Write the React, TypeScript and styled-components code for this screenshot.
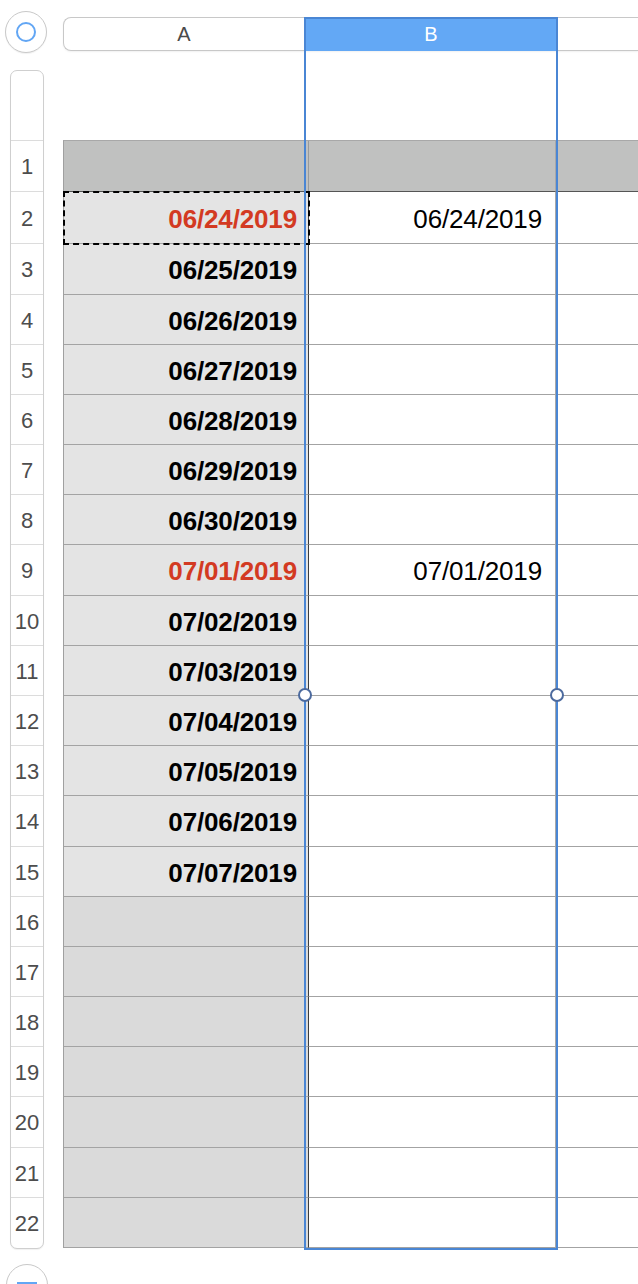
import React, { FC } from "react";
import styled, { createGlobalStyle } from "styled-components";

// row heights as measured down the sheet (row 1 is the header row)
const ROW_HEIGHTS = [51, 52, 51, 50, 50, 50, 50, 50, 51, 50, 50, 50, 50, 51, 50, 50, 50, 50, 50, 51, 50, 50];

const GlobalStyle = createGlobalStyle`
  html, body {
    margin: 0;
    padding: 0;
    background: #fff;
    font-family: "Liberation Sans", Arial, sans-serif;
  }
  * {
    box-sizing: border-box;
  }
`;

const Page = styled.div`
  position: relative;
  width: 638px;
  height: 1284px;
  overflow: hidden;
  background: #fff;
`;

const TopBar = styled.div`
  display: flex;
  align-items: flex-start;
  padding: 11px 0 0 5px;
  height: 70px;
`;

const RoundButton = styled.div`
  width: 42px;
  height: 42px;
  flex: none;
  border-radius: 50%;
  border: 1px solid #c9c9c9;
  background: #fff;
  display: flex;
  align-items: center;
  justify-content: center;
  box-shadow: 0 1px 1px rgba(0, 0, 0, 0.06);
`;

const Ring = styled.div`
  width: 20px;
  height: 20px;
  border-radius: 50%;
  border: 2px solid #62a6f4;
`;

const Minus = styled.div`
  width: 20px;
  height: 3px;
  background: #62a6f4;
`;

const HeaderBar = styled.div`
  margin: 6px 0 0 16px;
  flex: 1;
  height: 34px;
  display: flex;
  border: 1px solid #c8c8c8;
  border-right: none;
  border-radius: 8px 0 0 8px;
  box-shadow: 0 1px 2px rgba(0, 0, 0, 0.06);
  background: #fff;
`;

const ColHead = styled.div<{ $w?: number; $active?: boolean }>`
  flex: ${p => (p.$w ? `0 0 ${p.$w}px` : "1")};
  display: flex;
  align-items: center;
  justify-content: center;
  font-size: 20px;
  color: ${p => (p.$active ? "#fff" : "#4a4a4a")};
  background: ${p => (p.$active ? "#63a8f5" : "transparent")};
  margin: ${p => (p.$active ? "-1px 0" : "0")};
`;

const Body = styled.div`
  display: flex;
  align-items: flex-start;
  padding-left: 10px;
`;

const Side = styled.div`
  display: flex;
  flex-direction: column;
  align-items: center;
  flex: none;
  width: 34px;
`;

const RowHeads = styled.div`
  width: 34px;
  border: 1px solid #cfcfcf;
  border-radius: 7px;
  background: #fff;
  box-shadow: 0 1px 1px rgba(0, 0, 0, 0.06);
  overflow: hidden;
`;

const RowHeadTop = styled.div`
  height: 70px;
  border-bottom: 1px solid #dcdcdc;
`;

const RowNum = styled.div<{ $last?: boolean }>`
  display: flex;
  align-items: center;
  justify-content: center;
  padding-top: 2px;
  font-size: 22px;
  color: #4d4d4d;
  border-bottom: ${p => (p.$last ? "none" : "1px solid #dcdcdc")};
`;

const BottomButton = styled(RoundButton)`
  margin-top: 15px;
  align-items: flex-start;
  padding-top: 17px;
`;

const Sheet = styled.div`
  margin: 70px 0 0 19px;
  flex: 1;
  display: grid;
  grid-template-columns: 245px 247px 1fr;
  border-left: 1px solid #a0a0a0;
  border-top: 1px solid #a8a8a8;
`;

type CellKind = "head" | "label" | "empty" | "plain" | "rest";

const Cell = styled.div<{ $kind: CellKind; $red?: boolean; $marked?: boolean }>`
  display: flex;
  align-items: center;
  justify-content: flex-end;
  padding: 3px ${p => (p.$kind === "plain" ? "13px" : "11px")} 0 0;
  font-size: 26px;
  letter-spacing: -0.15px;
  white-space: nowrap;
  font-weight: ${p => (p.$kind === "label" ? 700 : 400)};
  color: ${p => (p.$red ? "#d33a22" : "#000")};
  background: ${p =>
    p.$kind === "head"
      ? "#c0c1c0"
      : p.$kind === "label"
      ? "#e4e4e4"
      : p.$kind === "empty"
      ? "#dadada"
      : "#fff"};
  border-bottom: 1px solid ${p => (p.$kind === "head" ? "#555" : "#a3a3a3")};
  outline: ${p => (p.$marked ? "2px dashed #000" : "none")};
  outline-offset: -1px;
  position: relative;
  z-index: ${p => (p.$marked ? 2 : 0)};
`;

const ColA = styled(Cell)<{ $headRow?: boolean }>`
  border-right: 1px solid ${p => (p.$headRow ? "#9a9a9a" : "#3c3c3c")};
`;

const ColB = styled(Cell)`
  border-right: 1px solid #a8a8a8;
`;

const Selection = styled.div`
  position: absolute;
  left: 304px;
  top: 17px;
  width: 254px;
  height: 1233px;
  border: 2px solid #4a86d4;
  pointer-events: none;
  z-index: 5;
`;

const Handle = styled.div<{ $side: "left" | "right" }>`
  position: absolute;
  top: 669px;
  ${p => p.$side}: -8px;
  width: 14px;
  height: 14px;
  border-radius: 50%;
  background: #fff;
  border: 2px solid #4c6a9e;
`;

const labels: string[] = [
  "06/24/2019",
  "06/25/2019",
  "06/26/2019",
  "06/27/2019",
  "06/28/2019",
  "06/29/2019",
  "06/30/2019",
  "07/01/2019",
  "07/02/2019",
  "07/03/2019",
  "07/04/2019",
  "07/05/2019",
  "07/06/2019",
  "07/07/2019"
];

// rows whose date also shows up in column B
const echoed: Record<number, boolean> = { 2: true, 9: true };

const App: FC = () => {
  const rows = ROW_HEIGHTS.map((h, i) => ({ n: i + 1, h }));
  const sheetRows = ROW_HEIGHTS.map(h => `${h}px`).join(" ");

  return (
    <Page>
      <GlobalStyle />
      <TopBar>
        <RoundButton>
          <Ring />
        </RoundButton>
        <HeaderBar>
          <ColHead $w={240}>A</ColHead>
          <ColHead $w={254} $active>
            B
          </ColHead>
          <ColHead />
        </HeaderBar>
      </TopBar>

      <Body>
        <Side>
          <RowHeads>
            <RowHeadTop />
            {rows.map(({ n, h }) => (
              <RowNum key={n} $last={n === 22} style={{ height: h }}>
                {n}
              </RowNum>
            ))}
          </RowHeads>
          <BottomButton>
            <Minus />
          </BottomButton>
        </Side>

        <Sheet style={{ gridTemplateRows: sheetRows }}>
          {rows.map(({ n }) => {
            if (n === 1) {
              return (
                <React.Fragment key={n}>
                  <ColA $kind="head" $headRow />
                  <ColB $kind="head" />
                  <Cell $kind="head" />
                </React.Fragment>
              );
            }
            const label = labels[n - 2];
            const red = !!echoed[n];
            return (
              <React.Fragment key={n}>
                <ColA $kind={label ? "label" : "empty"} $red={red} $marked={n === 2}>
                  {label}
                </ColA>
                <ColB $kind="plain">{red ? label : null}</ColB>
                <Cell $kind="rest" />
              </React.Fragment>
            );
          })}
        </Sheet>
      </Body>

      <Selection>
        <Handle $side="left" />
        <Handle $side="right" />
      </Selection>
    </Page>
  );
};

export default App;
